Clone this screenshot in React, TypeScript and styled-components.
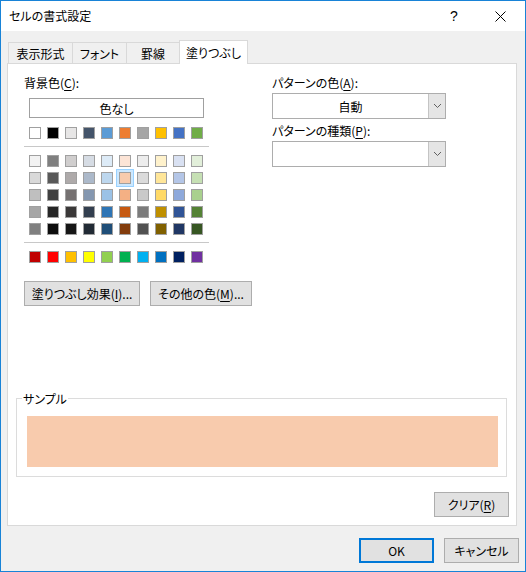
import React from "react";
import styled, { createGlobalStyle } from "styled-components";

const GlobalStyle = createGlobalStyle`
  html, body {
    margin: 0;
    padding: 0;
    background: #ffffff;
  }
  body {
    font-family: "Noto Sans CJK JP", "Noto Sans", sans-serif;
    font-size: 12px;
    font-feature-settings: "palt";
    color: #000000;
  }
`;

const Window = styled.div`
  width: 526px;
  height: 572px;
  box-sizing: border-box;
  border: 1px solid #1883d7;
  background: #f0f0f0;
  display: flex;
  flex-direction: column;
`;

const TitleBar = styled.div`
  height: 30px;
  flex: none;
  background: #ffffff;
  display: flex;
  align-items: center;
  padding: 0 2px 0 8px;
`;

const Title = styled.div`
  flex: 1;
  font-size: 12px;
  line-height: 16px;
`;

const CaptionButton = styled.div`
  width: 46px;
  height: 30px;
  display: flex;
  align-items: center;
  justify-content: center;
  font-family: "Liberation Sans", sans-serif;
  font-size: 14px;
`;

const Body = styled.div`
  flex: 1;
  display: flex;
  flex-direction: column;
  padding: 9px 6px 8px 6px;
`;

const TabRow = styled.div`
  height: 23px;
  display: flex;
  align-items: flex-end;
  padding-left: 1px;
  position: relative;
  z-index: 1;
`;

const Tab = styled.div<{ $w: number; $active?: boolean }>`
  box-sizing: border-box;
  width: ${(p) => p.$w}px;
  height: ${(p) => (p.$active ? 24 : 21)}px;
  margin-left: -1px;
  margin-bottom: ${(p) => (p.$active ? -1 : 0)}px;
  border: 1px solid #d9d9d9;
  border-bottom: none;
  background: ${(p) => (p.$active ? "#ffffff" : "#f0f0f0")};
  display: flex;
  align-items: center;
  justify-content: center;
  padding-top: ${(p) => (p.$active ? 0 : 1)}px;
  line-height: 15px;
  &:first-child {
    margin-left: 0;
  }
`;

const Panel = styled.div`
  box-sizing: border-box;
  width: 510px;
  height: 463px;
  background: #ffffff;
  border: 1px solid #d9d9d9;
  display: flex;
  flex-direction: column;
  padding: 11px 0 0 16px;
`;

const Columns = styled.div`
  display: flex;
`;

const LeftCol = styled.div`
  width: 248px;
  display: flex;
  flex-direction: column;
`;

const RightCol = styled.div`
  width: 174px;
  display: flex;
  flex-direction: column;
`;

const Label = styled.div<{ $mt?: number }>`
  line-height: 15px;
  height: 15px;
  margin-top: ${(p) => p.$mt ?? 0}px;
  white-space: nowrap;
`;

const U = styled.span`
  text-decoration: underline;
  text-underline-offset: 2px;
`;

const NoColor = styled.div`
  box-sizing: border-box;
  width: 175px;
  height: 20px;
  margin: 8px 0 0 5px;
  border: 1px solid #a0a0a0;
  display: flex;
  align-items: center;
  justify-content: center;
  line-height: 15px;
`;

const SwatchGrid = styled.div<{ $mt: number }>`
  display: grid;
  grid-template-columns: repeat(10, 12px);
  column-gap: 6px;
  row-gap: 5px;
  margin: ${(p) => p.$mt}px 0 0 5px;
`;

const Swatch = styled.div<{ $c: string; $sel?: boolean }>`
  box-sizing: border-box;
  width: 12px;
  height: 12px;
  background: ${(p) => p.$c};
  border: 1px solid #a0a0a0;
  box-shadow: ${(p) =>
    p.$sel ? "0 0 0 2px #cce8ff, 0 0 0 3px #99d1ff" : "none"};
`;

const Separator = styled.div<{ $mt: number }>`
  width: 185px;
  height: 1px;
  background: #c8c8c8;
  margin-top: ${(p) => p.$mt}px;
`;

const ButtonRow = styled.div`
  display: flex;
  gap: 10px;
  margin-top: 18px;
`;

const Button = styled.div<{ $w: number; $default?: boolean }>`
  box-sizing: border-box;
  width: ${(p) => p.$w}px;
  height: 25px;
  background: #e1e1e1;
  border: ${(p) => (p.$default ? "2px solid #0078d7" : "1px solid #adadad")};
  display: flex;
  align-items: center;
  justify-content: center;
  line-height: 15px;
  white-space: nowrap;
`;

const Combo = styled.div`
  box-sizing: border-box;
  width: 174px;
  height: 26px;
  margin-top: 3px;
  border: 1px solid #adadad;
  display: flex;
`;

const ComboText = styled.div`
  flex: 1;
  display: flex;
  align-items: center;
  justify-content: center;
  line-height: 15px;
`;

const ComboArrow = styled.div`
  width: 16px;
  background: #e5e5e5;
  border-left: 1px solid #c4c4c4;
  display: flex;
  align-items: center;
  justify-content: center;
`;

const GroupBox = styled.div`
  position: relative;
  box-sizing: border-box;
  width: 491px;
  height: 79px;
  margin: 92px 0 0 -8px;
  border: 1px solid #dcdcdc;
  padding: 17px 0 0 10px;
`;

const GroupLabel = styled.div`
  position: absolute;
  left: 5px;
  top: -8px;
  padding: 0 1px;
  background: #ffffff;
  line-height: 15px;
`;

const SampleFill = styled.div<{ $c: string }>`
  width: 471px;
  height: 51px;
  background: ${(p) => p.$c};
`;

const ClearRow = styled.div`
  display: flex;
  justify-content: flex-end;
  margin: 15px 7px 0 0;
`;

const DialogButtons = styled.div`
  display: flex;
  justify-content: flex-end;
  gap: 10px;
  margin-top: 12px;
`;

const Chevron = () => (
  <svg width="9" height="6" viewBox="0 0 9 6">
    <path d="M1 1 L4.5 4.5 L8 1" fill="none" stroke="#606060" strokeWidth="1" />
  </svg>
);

const CloseIcon = () => (
  <svg width="11" height="11" viewBox="0 0 11 11">
    <path d="M0.5 0.5 L10.5 10.5 M10.5 0.5 L0.5 10.5" stroke="#000" strokeWidth="1" />
  </svg>
);

const themeRow = [
  "#FFFFFF", "#000000", "#E7E6E6", "#44546A", "#5B9BD5",
  "#ED7D31", "#A5A5A5", "#FFC000", "#4472C4", "#70AD47",
];

const tints = [
  "#F2F2F2", "#7F7F7F", "#D0CECE", "#D6DCE4", "#DDEBF7", "#FCE4D6", "#EDEDED", "#FFF2CC", "#D9E1F2", "#E2EFDA",
  "#D9D9D9", "#595959", "#AEAAAA", "#ACB9CA", "#BDD7EE", "#F8CBAD", "#DBDBDB", "#FFE699", "#B4C6E7", "#C6E0B4",
  "#BFBFBF", "#404040", "#757171", "#8497B0", "#9BC2E6", "#F4B084", "#C9C9C9", "#FFD966", "#8EA9DB", "#A9D08E",
  "#A6A6A6", "#262626", "#3A3838", "#333F4F", "#2F75B5", "#C65911", "#7B7B7B", "#BF8F00", "#305496", "#548235",
  "#808080", "#0D0D0D", "#161616", "#222B35", "#1F4E78", "#833C0C", "#525252", "#806000", "#203764", "#375623",
];

const standard = [
  "#C00000", "#FF0000", "#FFC000", "#FFFF00", "#92D050",
  "#00B050", "#00B0F0", "#0070C0", "#002060", "#7030A0",
];

const selected = "#F8CBAD";

const tabs = [
  { name: "表示形式", w: 65 },
  { name: "フォント", w: 55 },
  { name: "罫線", w: 54 },
  { name: "塗りつぶし", w: 69, active: true },
];

const App = () => {
  return (
    <Window>
      <GlobalStyle />
      <TitleBar>
        <Title>セルの書式設定</Title>
        <CaptionButton>?</CaptionButton>
        <CaptionButton>
          <CloseIcon />
        </CaptionButton>
      </TitleBar>
      <Body>
        <TabRow>
          {tabs.map((t) => (
            <Tab key={t.name} $w={t.w} $active={t.active}>
              {t.name}
            </Tab>
          ))}
        </TabRow>
        <Panel>
          <Columns>
            <LeftCol>
              <Label>
                背景色(<U>C</U>):
              </Label>
              <NoColor>色なし</NoColor>
              <SwatchGrid $mt={9}>
                {themeRow.map((c, i) => (
                  <Swatch key={i} $c={c} />
                ))}
              </SwatchGrid>
              <Separator $mt={7} />
              <SwatchGrid $mt={8}>
                {tints.map((c, i) => (
                  <Swatch key={i} $c={c} $sel={c === selected} />
                ))}
              </SwatchGrid>
              <Separator $mt={7} />
              <SwatchGrid $mt={8}>
                {standard.map((c, i) => (
                  <Swatch key={i} $c={c} />
                ))}
              </SwatchGrid>
              <ButtonRow>
                <Button $w={116}>
                  塗りつぶし効果(<U>I</U>)...
                </Button>
                <Button $w={102}>
                  その他の色(<U>M</U>)...
                </Button>
              </ButtonRow>
            </LeftCol>
            <RightCol>
              <Label>
                パターンの色(<U>A</U>):
              </Label>
              <Combo>
                <ComboText>自動</ComboText>
                <ComboArrow>
                  <Chevron />
                </ComboArrow>
              </Combo>
              <Label $mt={4}>
                パターンの種類(<U>P</U>):
              </Label>
              <Combo>
                <ComboText />
                <ComboArrow>
                  <Chevron />
                </ComboArrow>
              </Combo>
            </RightCol>
          </Columns>
          <GroupBox>
            <GroupLabel>サンプル</GroupLabel>
            <SampleFill $c={selected} />
          </GroupBox>
          <ClearRow>
            <Button $w={75}>
              クリア(<U>R</U>)
            </Button>
          </ClearRow>
        </Panel>
        <DialogButtons>
          <Button $w={75} $default>
            OK
          </Button>
          <Button $w={75}>キャンセル</Button>
        </DialogButtons>
      </Body>
    </Window>
  );
};

export default App;
